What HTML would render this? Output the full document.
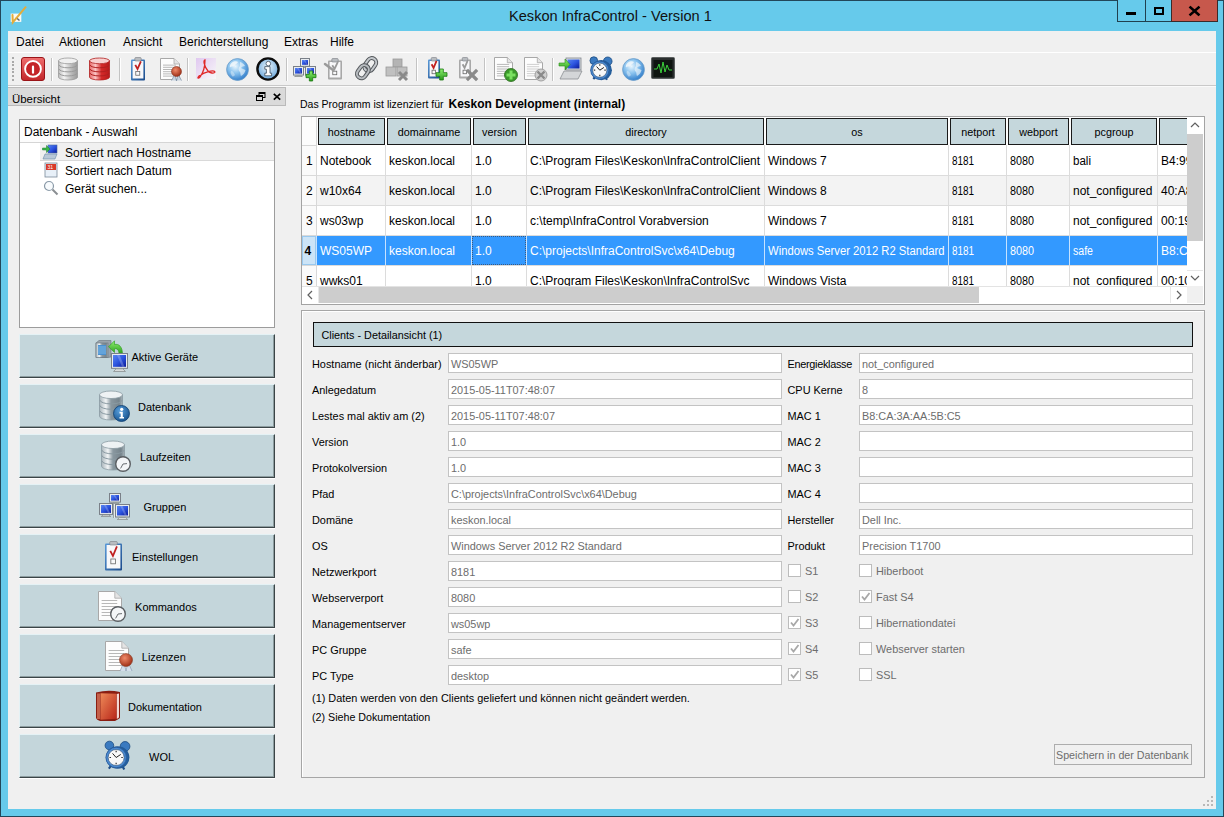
<!DOCTYPE html><html><head><meta charset="utf-8"><style>
*{margin:0;padding:0;box-sizing:border-box}
html,body{width:1224px;height:817px;overflow:hidden;background:#f0f0f0}
body{position:relative;font-family:"Liberation Sans",sans-serif;color:#000;font-size:12px}
.a{position:absolute}
.t{position:absolute;white-space:nowrap}
.btn{position:absolute;left:19px;width:256px;height:44px;background:#c4d6db;border-top:1px solid #e4f2f5;border-left:1px solid #e4f2f5;border-right:1px solid #3b4547;border-bottom:1px solid #3b4547;box-shadow:inset -1px -1px 0 #8d9da0, 0 1px 0 #fff}
.hdr{position:absolute;top:118px;height:27px;background:#c5d7dc;border:1px solid #1a1a1a}
.inp{position:absolute;height:20px;background:#fff;border:1px solid #c3c3c3}
.cb{position:absolute;width:13px;height:13px;background:#fff;border:1px solid #bcbcbc}
svg{overflow:visible}
</style></head><body><svg width="0" height="0" style="position:absolute"><defs>
<linearGradient id="gRed" x1="0" y1="0" x2="0" y2="1"><stop offset="0" stop-color="#ef6e6e"/><stop offset="1" stop-color="#c2262a"/></linearGradient>
<linearGradient id="gSil" x1="0" y1="0" x2="1" y2="0"><stop offset="0" stop-color="#bdbdbd"/><stop offset=".3" stop-color="#f4f4f4"/><stop offset=".7" stop-color="#b8b8b8"/><stop offset="1" stop-color="#9a9a9a"/></linearGradient>
<linearGradient id="gSil2" x1="0" y1="0" x2="1" y2="0"><stop offset="0" stop-color="#aab6bc"/><stop offset=".28" stop-color="#f2f5f6"/><stop offset=".5" stop-color="#8a98a0"/><stop offset=".85" stop-color="#76848c"/><stop offset="1" stop-color="#a8b4ba"/></linearGradient>
<linearGradient id="gClip" x1="0" y1="0" x2="1" y2="1"><stop offset="0" stop-color="#5a9ad8"/><stop offset="1" stop-color="#1a4a8a"/></linearGradient>
<linearGradient id="gRDb" x1="0" y1="0" x2="1" y2="0"><stop offset="0" stop-color="#e86a6a"/><stop offset=".3" stop-color="#fbc4c4"/><stop offset=".6" stop-color="#d42a2a"/><stop offset="1" stop-color="#b81a1a"/></linearGradient>
<linearGradient id="gScr" x1="0" y1="0" x2="1" y2="1"><stop offset="0" stop-color="#5a86f0"/><stop offset=".5" stop-color="#2d55e0"/><stop offset="1" stop-color="#0a1a9a"/></linearGradient>
<radialGradient id="gGlobe" cx=".4" cy=".35" r=".7"><stop offset="0" stop-color="#eaf6fd"/><stop offset=".45" stop-color="#8cc4ef"/><stop offset="1" stop-color="#2a78c8"/></radialGradient>
<linearGradient id="gGrn" x1="0" y1="0" x2="0" y2="1"><stop offset="0" stop-color="#8ef070"/><stop offset="1" stop-color="#2a9c1c"/></linearGradient>
<linearGradient id="gBook" x1="0" y1="0" x2="1" y2="1"><stop offset="0" stop-color="#ee8a58"/><stop offset="1" stop-color="#b8261a"/></linearGradient>
<radialGradient id="gInfo" cx=".5" cy=".4" r=".6"><stop offset="0" stop-color="#e8f4fc"/><stop offset="1" stop-color="#6aa6da"/></radialGradient>
<radialGradient id="gBlueI" cx=".4" cy=".35" r=".7"><stop offset="0" stop-color="#5aa0dc"/><stop offset="1" stop-color="#14508c"/></radialGradient>
<radialGradient id="gClk" cx=".5" cy=".5" r=".6"><stop offset="0" stop-color="#3f86c8"/><stop offset="1" stop-color="#1a4f8c"/></radialGradient>
<radialGradient id="gSeal" cx=".4" cy=".35" r=".7"><stop offset="0" stop-color="#f08a6a"/><stop offset="1" stop-color="#9a2a12"/></radialGradient>
<linearGradient id="gPdf" x1="0" y1="0" x2="1" y2="1"><stop offset="0" stop-color="#e0c8f0"/><stop offset="1" stop-color="#f8f8f8"/></linearGradient>
</defs></svg>
<div class="a" style="left:0px;top:0px;width:1224px;height:817px;background:#66caeb"></div>
<div class="a" style="left:0px;top:0px;width:1224px;height:1px;background:#22475a"></div>
<div class="a" style="left:0px;top:0px;width:1px;height:817px;background:#22475a"></div>
<div class="a" style="left:1223px;top:0px;width:1px;height:817px;background:#22475a"></div>
<div class="a" style="left:0px;top:816px;width:1224px;height:1px;background:#22475a"></div>
<div class="a" style="left:8px;top:31px;width:1208px;height:778px;background:#f0f0f0"></div>
<svg class="a" style="left:10px;top:6px" width="17" height="17" viewBox="0 0 17 17"><rect x="0.7" y="7.6" width="10.6" height="8.3" fill="#fbfaf4"/>
<path d="M6 11.5 L9.5 14.5" stroke="#6a6a6a" stroke-width="1.6"/>
<path d="M2.5 9 L2.8 16.3 L15.6 1.2" stroke="#e3ac3c" stroke-width="2" fill="none" stroke-linecap="round"/></svg>
<div class="t" style="left:509px;top:7.14px;font-size:14.6px;line-height:18px;color:#111;">Keskon InfraControl - Version 1</div>
<div class="a" style="left:1117px;top:0;width:29px;height:22px;border:1px solid #20404e;border-top:none;background:#66caeb"></div>
<div class="a" style="left:1145px;top:0;width:27px;height:22px;border:1px solid #20404e;border-top:none;background:#66caeb"></div>
<div class="a" style="left:1171px;top:0;width:47px;height:22px;border:1px solid #3a2a2a;border-top:none;background:#c7584c"></div>
<div class="a" style="left:1126px;top:12px;width:10px;height:3px;background:#000"></div>
<div class="a" style="left:1154px;top:7px;width:10px;height:8px;border:2px solid #000"></div>
<svg class="a" style="left:1189px;top:6px" width="11" height="10" viewBox="0 0 11 10"><path d="M1.5 1.5 L9.5 8.5 M9.5 1.5 L1.5 8.5" stroke="#000" stroke-width="2.6" stroke-linecap="square"/></svg>
<div class="a" style="left:8px;top:52px;width:1208px;height:1px;background:#ffffff"></div>
<div class="t" style="left:16px;top:35.34px;font-size:12px;line-height:15px;color:#000;">Datei</div>
<div class="t" style="left:59px;top:35.34px;font-size:12px;line-height:15px;color:#000;">Aktionen</div>
<div class="t" style="left:123px;top:35.34px;font-size:12px;line-height:15px;color:#000;">Ansicht</div>
<div class="t" style="left:179px;top:35.34px;font-size:12px;line-height:15px;color:#000;">Berichterstellung</div>
<div class="t" style="left:284px;top:35.34px;font-size:12px;line-height:15px;color:#000;">Extras</div>
<div class="t" style="left:330px;top:35.34px;font-size:12px;line-height:15px;color:#000;">Hilfe</div>
<div class="a" style="left:8px;top:85px;width:1208px;height:1px;background:#c9c9c9"></div>
<div class="a" style="left:8px;top:86px;width:1208px;height:1px;background:#fafafa"></div>
<div class="a" style="left:12px;top:57.0px;width:2px;height:2px;background:#a9a9a9"></div>
<div class="a" style="left:12px;top:60.6px;width:2px;height:2px;background:#a9a9a9"></div>
<div class="a" style="left:12px;top:64.2px;width:2px;height:2px;background:#a9a9a9"></div>
<div class="a" style="left:12px;top:67.8px;width:2px;height:2px;background:#a9a9a9"></div>
<div class="a" style="left:12px;top:71.4px;width:2px;height:2px;background:#a9a9a9"></div>
<div class="a" style="left:12px;top:75.0px;width:2px;height:2px;background:#a9a9a9"></div>
<div class="a" style="left:12px;top:78.6px;width:2px;height:2px;background:#a9a9a9"></div>
<div class="a" style="left:51px;top:58px;width:1px;height:23px;background:#c3c3c3"></div>
<div class="a" style="left:52px;top:58px;width:1px;height:23px;background:#ffffff"></div>
<div class="a" style="left:119px;top:58px;width:1px;height:23px;background:#c3c3c3"></div>
<div class="a" style="left:120px;top:58px;width:1px;height:23px;background:#ffffff"></div>
<div class="a" style="left:187px;top:58px;width:1px;height:23px;background:#c3c3c3"></div>
<div class="a" style="left:188px;top:58px;width:1px;height:23px;background:#ffffff"></div>
<div class="a" style="left:286px;top:58px;width:1px;height:23px;background:#c3c3c3"></div>
<div class="a" style="left:287px;top:58px;width:1px;height:23px;background:#ffffff"></div>
<div class="a" style="left:416px;top:58px;width:1px;height:23px;background:#c3c3c3"></div>
<div class="a" style="left:417px;top:58px;width:1px;height:23px;background:#ffffff"></div>
<div class="a" style="left:484px;top:58px;width:1px;height:23px;background:#c3c3c3"></div>
<div class="a" style="left:485px;top:58px;width:1px;height:23px;background:#ffffff"></div>
<div class="a" style="left:552px;top:58px;width:1px;height:23px;background:#c3c3c3"></div>
<div class="a" style="left:553px;top:58px;width:1px;height:23px;background:#ffffff"></div>
<svg class="a" style="left:21px;top:57px" width="24" height="24" viewBox="0 0 24 24"><rect x="0.5" y="0.5" width="23" height="23" rx="2.5" fill="url(#gRed)" stroke="#9a1418" stroke-width="1"/>
<circle cx="12" cy="11.9" r="7.9" stroke="#fff" stroke-width="1.9" fill="#c42428"/>
<rect x="10.9" y="8.6" width="2.2" height="8.2" rx="1.1" fill="#fff"/></svg>
<svg class="a" style="left:58px;top:58px" width="20" height="22" viewBox="0 0 20 22"><path d="M0.5 2.8600000000000003 L0.5 19.14 A9.5 2.8600000000000003 0 0 0 19.5 19.14 L19.5 2.8600000000000003 Z" fill="url(#gSil)" stroke="#9a9a9a" stroke-width="0.8"/>
<ellipse cx="10.0" cy="2.8600000000000003" rx="9.5" ry="2.8600000000000003" fill="#f0f0f0" stroke="#9a9a9a" stroke-width="0.8"/><path d="M1 6.930000000000001 A9.0 2.8600000000000003 0 0 0 19 6.930000000000001" fill="none" stroke="#9a9a9a" stroke-width="1"/><path d="M1 11.0 A9.0 2.8600000000000003 0 0 0 19 11.0" fill="none" stroke="#9a9a9a" stroke-width="1"/><path d="M1 15.07 A9.0 2.8600000000000003 0 0 0 19 15.07" fill="none" stroke="#9a9a9a" stroke-width="1"/></svg>
<svg class="a" style="left:89px;top:58px" width="21" height="22" viewBox="0 0 21 22"><path d="M0.5 2.8600000000000003 L0.5 19.14 A10.0 2.8600000000000003 0 0 0 20.5 19.14 L20.5 2.8600000000000003 Z" fill="url(#gRDb)" stroke="#b02020" stroke-width="0.8"/>
<ellipse cx="10.5" cy="2.8600000000000003" rx="10.0" ry="2.8600000000000003" fill="#f8d0d0" stroke="#b02020" stroke-width="0.8"/><path d="M1 6.930000000000001 A9.5 2.8600000000000003 0 0 0 20 6.930000000000001" fill="none" stroke="#b02020" stroke-width="1"/><path d="M1 11.0 A9.5 2.8600000000000003 0 0 0 20 11.0" fill="none" stroke="#b02020" stroke-width="1"/><path d="M1 15.07 A9.5 2.8600000000000003 0 0 0 20 15.07" fill="none" stroke="#b02020" stroke-width="1"/></svg>
<svg class="a" style="left:130px;top:57px" width="16" height="24" viewBox="0 0 16 24"><rect x="1" y="2.5" width="14" height="21" rx="1" fill="url(#gClip)"/>
<rect x="2.6" y="4" width="10.8" height="17.5" fill="#f8f8fa"/>
<rect x="4.8" y="0.5" width="6.4" height="3.5" rx="1" fill="#b8bcc0" stroke="#7a7e84" stroke-width="0.6"/>
<path d="M5.28 7.92 L7.52 12.0 L10.88 4.32" stroke="#c02020" stroke-width="1.8" fill="none"/>
<rect x="5.76" y="14.399999999999999" width="4.0" height="3.84" fill="none" stroke="#6a6a6a" stroke-width="0.8"/></svg>
<svg class="a" style="left:160px;top:58px" width="20" height="22" viewBox="0 0 20 22"><path d="M0.5 0.5 H14.0 L19.5 6.0 V21.5 H0.5 Z" fill="#fdfdfd" stroke="#a8a8a8" stroke-width="1"/>
<path d="M14.0 0.5 V6.0 H19.5" fill="#e4e4e4" stroke="#a8a8a8" stroke-width="0.8"/><rect x="3.0" y="6.6" width="13.0" height="1" fill="#b8b8b8"/><rect x="3.0" y="8.8" width="13.0" height="1" fill="#b8b8b8"/><rect x="3.0" y="11.0" width="13.0" height="1" fill="#b8b8b8"/><rect x="3.0" y="13.2" width="13.0" height="1" fill="#b8b8b8"/><rect x="3.0" y="15.4" width="13.0" height="1" fill="#b8b8b8"/><rect x="3.0" y="17.6" width="13.0" height="1" fill="#b8b8b8"/></svg>
<svg class="a" style="left:170px;top:65px" width="13" height="17" viewBox="0 0 13 17"><path d="M1.5 15.5 L5 9 L6.5 16 L8 9 L11.5 15.5" fill="#c8d4e0" stroke="#7a8ca0" stroke-width=".7"/><circle cx="6.5" cy="6.5" r="5" fill="url(#gSeal)" stroke="#7a2410" stroke-width=".5"/></svg>
<svg class="a" style="left:196px;top:58px" width="20" height="21" viewBox="0 0 20 21"><rect x="0" y="0" width="20" height="21" fill="url(#gPdf)"/>
<path d="M9 2 C 7 2 8 8 12 13 C 14 15 18 16 19 14 C 18 12 10 13 3 18 C 1 20 2 21 4 19 C 7 15 9 8 9 2 Z" fill="none" stroke="#e02828" stroke-width="1.3"/></svg>
<svg class="a" style="left:226px;top:58px" width="23" height="23" viewBox="0 0 23 23"><circle cx="11.5" cy="11.5" r="10.9" fill="url(#gGlobe)" stroke="#6a9cc8" stroke-width="0.8"/>
<g transform="scale(1.0)" fill="#f2f8fc" opacity=".85">
<path d="M6 4.5 C8 3 11 3 12 4 C11 6 9 6 8.5 8 C7 9 5 8 4 9.5 C3.5 8 4 6 6 4.5 Z"/>
<path d="M14 4 C16 4.5 18 6 19 8 C17.5 8.5 16 8 15 10 C16 11 18 11 19.5 12 C19 15 17 17 15 18 C14 16 15 14 13 13 C12 11 13 9 14 8 Z" opacity=".75"/>
<path d="M5 13 C7 13 8 15 9 17 C8 18.5 7 19 6 18 C5 16 4 15 5 13 Z" opacity=".5"/>
</g></svg>
<svg class="a" style="left:256px;top:57px" width="24" height="24" viewBox="0 0 24 24"><circle cx="12" cy="12" r="10.6" fill="url(#gInfo)" stroke="#0c0c0c" stroke-width="2.4"/>
<circle cx="12.3" cy="6.6" r="2.3" fill="#fff" stroke="#2a3a4a" stroke-width=".7"/>
<path d="M8.8 9.6 H14 V16.2 H15.6 V18.8 H8.8 V16.2 H10.4 V12.2 H8.8 Z" fill="#fff" stroke="#2a3a4a" stroke-width=".7"/></svg>
<svg class="a" style="left:300px;top:58px" width="10" height="10" viewBox="0 0 10 10"><rect x="0.5" y="0.5" width="9" height="7.800000000000001" fill="#e8ecf0" stroke="#7a8088" stroke-width="1"/>
<rect x="2" y="2" width="6" height="4.800000000000001" fill="url(#gScr)"/>
<path d="M3.5 2 L5.0 2 L8.0 6.800000000000001 L6.5 6.800000000000001 Z" fill="#fff" opacity=".22"/>
<path d="M3.0 8.8 L1.5 9.5 L8.5 9.5 L7.0 8.8 Z" fill="#d8dcdc" stroke="#8a9090" stroke-width="0.8"/></svg>
<svg class="a" style="left:293px;top:66px" width="11" height="11" viewBox="0 0 11 11"><rect x="0.5" y="0.5" width="10" height="8.58" fill="#e8ecf0" stroke="#7a8088" stroke-width="1"/>
<rect x="2" y="2" width="7" height="5.58" fill="url(#gScr)"/>
<path d="M3.8499999999999996 2 L5.5 2 L8.8 7.58 L7.15 7.58 Z" fill="#fff" opacity=".22"/>
<path d="M3.3 9.58 L1.65 10.5 L9.35 10.5 L7.699999999999999 9.58 Z" fill="#d8dcdc" stroke="#8a9090" stroke-width="0.8"/></svg>
<svg class="a" style="left:305px;top:66px" width="11" height="11" viewBox="0 0 11 11"><rect x="0.5" y="0.5" width="10" height="8.58" fill="#e8ecf0" stroke="#7a8088" stroke-width="1"/>
<rect x="2" y="2" width="7" height="5.58" fill="url(#gScr)"/>
<path d="M3.8499999999999996 2 L5.5 2 L8.8 7.58 L7.15 7.58 Z" fill="#fff" opacity=".22"/>
<path d="M3.3 9.58 L1.65 10.5 L9.35 10.5 L7.699999999999999 9.58 Z" fill="#d8dcdc" stroke="#8a9090" stroke-width="0.8"/></svg>
<svg class="a" style="left:306px;top:71px" width="10" height="10" viewBox="0 0 10 10"><path d="M3.3333333333333335 0 H6.666666666666667 V3.3333333333333335 H10 V6.666666666666667 H6.666666666666667 V10 H3.3333333333333335 V6.666666666666667 H0 V3.3333333333333335 H3.3333333333333335 Z" fill="url(#gGrn)" stroke="#1a7a10" stroke-width="0.8"/></svg>
<svg class="a" style="left:327px;top:58px" width="16" height="22" viewBox="0 0 16 22"><rect x="1" y="2.5" width="14" height="19" rx="1" fill="#a8a8a8"/>
<rect x="2.6" y="4" width="10.8" height="15.5" fill="#f8f8fa"/>
<rect x="4.8" y="0.5" width="6.4" height="3.5" rx="1" fill="#b8bcc0" stroke="#7a7e84" stroke-width="0.6"/>
<path d="M5.28 7.260000000000001 L7.52 11.0 L10.88 3.96" stroke="#9a9a9a" stroke-width="1.8" fill="none"/>
<rect x="5.76" y="13.2" width="4.0" height="3.52" fill="none" stroke="#6a6a6a" stroke-width="0.8"/></svg>
<svg class="a" style="left:324px;top:62px" width="10" height="10" viewBox="0 0 10 10"><path d="M1 2 L9 8" stroke="#9a9a9a" stroke-width="2.5" stroke-linecap="round"/></svg>
<svg class="a" style="left:354px;top:57px" width="24" height="24" viewBox="0 0 24 24"><g transform="rotate(35 12 12)">
<rect x="8.5" y="-1" width="9" height="14" rx="4.5" fill="none" stroke="#54585c" stroke-width="4"/>
<rect x="8.5" y="-1" width="9" height="14" rx="4.5" fill="none" stroke="#c4c8cc" stroke-width="2"/>
<rect x="6.5" y="9" width="9" height="14" rx="4.5" fill="none" stroke="#54585c" stroke-width="4"/>
<rect x="6.5" y="9" width="9" height="14" rx="4.5" fill="none" stroke="#b8bcc0" stroke-width="2"/>
</g></svg>
<svg class="a" style="left:385px;top:58px" width="24" height="24" viewBox="0 0 24 24"><rect x="8" y="1" width="9" height="8" fill="#b4b4b4" stroke="#9a9a9a" stroke-width=".8"/>
<rect x="1" y="9" width="10" height="9" fill="#c0c0c0" stroke="#9a9a9a" stroke-width=".8"/>
<rect x="12" y="9" width="10" height="9" fill="#c0c0c0" stroke="#9a9a9a" stroke-width=".8"/>
<path d="M14 14 L22 22 M22 14 L14 22" stroke="#8a8a8a" stroke-width="3"/></svg>
<svg class="a" style="left:427px;top:57px" width="14" height="22" viewBox="0 0 14 22"><rect x="1" y="2.5" width="12" height="19" rx="1" fill="url(#gClip)"/>
<rect x="2.6" y="4" width="8.8" height="15.5" fill="#f8f8fa"/>
<rect x="4.2" y="0.5" width="5.6000000000000005" height="3.5" rx="1" fill="#b8bcc0" stroke="#7a7e84" stroke-width="0.6"/>
<path d="M4.62 7.260000000000001 L6.58 11.0 L9.520000000000001 3.96" stroke="#c02020" stroke-width="1.8" fill="none"/>
<rect x="5.04" y="13.2" width="3.5" height="3.52" fill="none" stroke="#6a6a6a" stroke-width="0.8"/></svg>
<svg class="a" style="left:436px;top:69px" width="11" height="11" viewBox="0 0 11 11"><path d="M3.6666666666666665 0 H7.333333333333333 V3.6666666666666665 H11 V7.333333333333333 H7.333333333333333 V11 H3.6666666666666665 V7.333333333333333 H0 V3.6666666666666665 H3.6666666666666665 Z" fill="url(#gGrn)" stroke="#1a7a10" stroke-width="0.8"/></svg>
<svg class="a" style="left:458px;top:57px" width="14" height="22" viewBox="0 0 14 22"><rect x="1" y="2.5" width="12" height="19" rx="1" fill="#a8a8a8"/>
<rect x="2.6" y="4" width="8.8" height="15.5" fill="#f8f8fa"/>
<rect x="4.2" y="0.5" width="5.6000000000000005" height="3.5" rx="1" fill="#b8bcc0" stroke="#7a7e84" stroke-width="0.6"/>
<path d="M4.62 7.260000000000001 L6.58 11.0 L9.520000000000001 3.96" stroke="#9a9a9a" stroke-width="1.8" fill="none"/>
<rect x="5.04" y="13.2" width="3.5" height="3.52" fill="none" stroke="#6a6a6a" stroke-width="0.8"/></svg>
<svg class="a" style="left:466px;top:69px" width="12" height="12" viewBox="0 0 12 12"><path d="M2 2 L10 10 M10 2 L2 10" stroke="#8a8a8a" stroke-width="3.2" stroke-linecap="square"/></svg>
<svg class="a" style="left:494px;top:57px" width="19" height="23" viewBox="0 0 19 23"><path d="M0.5 0.5 H13.3 L18.5 5.7 V22.5 H0.5 Z" fill="#fdfdfd" stroke="#a8a8a8" stroke-width="1"/>
<path d="M13.3 0.5 V5.7 H18.5" fill="#e4e4e4" stroke="#a8a8a8" stroke-width="0.8"/><rect x="2.85" y="6.9" width="12.35" height="1" fill="#b8b8b8"/><rect x="2.85" y="9.2" width="12.35" height="1" fill="#b8b8b8"/><rect x="2.85" y="11.5" width="12.35" height="1" fill="#b8b8b8"/><rect x="2.85" y="13.8" width="12.35" height="1" fill="#b8b8b8"/><rect x="2.85" y="16.1" width="12.35" height="1" fill="#b8b8b8"/><rect x="2.85" y="18.4" width="12.35" height="1" fill="#b8b8b8"/></svg>
<svg class="a" style="left:504px;top:68px" width="14" height="14" viewBox="0 0 14 14"><circle cx="7" cy="7" r="6.5" fill="#3a9a2a" stroke="#2a6a1a" stroke-width=".8"/><path d="M7 2.5 V11.5 M2.5 7 H11.5" stroke="#7ae060" stroke-width="3"/></svg>
<svg class="a" style="left:524px;top:57px" width="19" height="23" viewBox="0 0 19 23"><path d="M0.5 0.5 H13.3 L18.5 5.7 V22.5 H0.5 Z" fill="#fdfdfd" stroke="#a8a8a8" stroke-width="1"/>
<path d="M13.3 0.5 V5.7 H18.5" fill="#e4e4e4" stroke="#a8a8a8" stroke-width="0.8"/><rect x="2.85" y="6.9" width="12.35" height="1" fill="#d0d0d0"/><rect x="2.85" y="9.2" width="12.35" height="1" fill="#d0d0d0"/><rect x="2.85" y="11.5" width="12.35" height="1" fill="#d0d0d0"/><rect x="2.85" y="13.8" width="12.35" height="1" fill="#d0d0d0"/><rect x="2.85" y="16.1" width="12.35" height="1" fill="#d0d0d0"/><rect x="2.85" y="18.4" width="12.35" height="1" fill="#d0d0d0"/></svg>
<svg class="a" style="left:534px;top:68px" width="14" height="14" viewBox="0 0 14 14"><circle cx="7" cy="7" r="6" fill="#d0d0d0" stroke="#a0a0a0" stroke-width="1"/><path d="M3.5 3.5 L10.5 10.5 M10.5 3.5 L3.5 10.5" stroke="#8a8a8a" stroke-width="2.4"/></svg>
<svg class="a" style="left:558px;top:57px" width="24" height="24" viewBox="0 0 24 24"><rect x="8" y="1" width="15" height="12" fill="#d8dce0" stroke="#80868c" stroke-width=".8"/>
<rect x="9.5" y="2.5" width="12" height="9" fill="url(#gScr)"/>
<path d="M6 14 L24 14 L20 22 L2 22 Z" fill="#d4d6d8" stroke="#8a8e92" stroke-width=".8"/>
<path d="M1 6 H7 V2 L12 7.5 L7 13 V9 H1 Z" fill="url(#gGrn)" stroke="#2a8a1a" stroke-width=".6"/></svg>
<svg class="a" style="left:589px;top:57px" width="24" height="24" viewBox="0 0 24 24"><circle cx="4.800000000000001" cy="3.5999999999999996" r="3.84" fill="#3a7ac0" stroke="#1a4a80" stroke-width="0.8"/>
<circle cx="18.72" cy="4.32" r="4.32" fill="#3a7ac0" stroke="#1a4a80" stroke-width="0.8"/>
<path d="M4.32 22.080000000000002 L7.199999999999999 18.72 M18.0 22.799999999999997 L15.600000000000001 18.72" stroke="#1e4e88" stroke-width="2.2"/>
<ellipse cx="12.3" cy="13.200000000000001" rx="10.620000000000001" ry="10.120000000000001" fill="url(#gClk)"/>
<circle cx="10.8" cy="13.200000000000001" r="9.120000000000001" fill="#4a8ad0" stroke="#2a5a9a" stroke-width="0.8"/>
<circle cx="10.8" cy="13.200000000000001" r="7.113600000000001" fill="#f8f8f8" stroke="#2a4a70" stroke-width="0.6"/>
<path d="M10.8 13.200000000000001 L7.6080000000000005 9.552 M10.8 13.200000000000001 L14.904000000000002 10.464" stroke="#222" stroke-width="1"/>
<path d="M10.8 7.272 V8.64 M10.8 19.128 V17.76 M4.872 13.200000000000001 H6.24 M16.728 13.200000000000001 H15.360000000000001" stroke="#333" stroke-width="1.2"/></svg>
<svg class="a" style="left:622px;top:58px" width="23" height="23" viewBox="0 0 23 23"><circle cx="11.5" cy="11.5" r="10.9" fill="url(#gGlobe)" stroke="#6a9cc8" stroke-width="0.8"/>
<g transform="scale(1.0)" fill="#f2f8fc" opacity=".85">
<path d="M6 4.5 C8 3 11 3 12 4 C11 6 9 6 8.5 8 C7 9 5 8 4 9.5 C3.5 8 4 6 6 4.5 Z"/>
<path d="M14 4 C16 4.5 18 6 19 8 C17.5 8.5 16 8 15 10 C16 11 18 11 19.5 12 C19 15 17 17 15 18 C14 16 15 14 13 13 C12 11 13 9 14 8 Z" opacity=".75"/>
<path d="M5 13 C7 13 8 15 9 17 C8 18.5 7 19 6 18 C5 16 4 15 5 13 Z" opacity=".5"/>
</g></svg>
<svg class="a" style="left:651px;top:57px" width="24" height="24" viewBox="0 0 24 24"><rect x="0.5" y="0.5" width="23" height="21" rx="1" fill="#2a2e2e" stroke="#5a5e5e" stroke-width="1"/>
<rect x="2.5" y="3" width="19" height="17" fill="#0e1410"/>
<path d="M3 12 H6 L8 7 L10 16 L12 5 L14 15 L16 8 L18 13 H21" stroke="#3ad03a" stroke-width="1" fill="none"/></svg>
<div class="a" style="left:8px;top:87px;width:278px;height:19px;background:#dadada;border:1px solid #bababa;border-left:none"></div>
<div class="t" style="left:12px;top:91.55px;font-size:11.4px;line-height:14px;color:#000;">Übersicht</div>
<svg class="a" style="left:256px;top:92px" width="10" height="9" viewBox="0 0 10 9"><rect x="3" y="0.5" width="6" height="5" fill="none" stroke="#000" stroke-width="1"/><rect x="3" y="0.5" width="6" height="1.5" fill="#000"/><rect x="0.5" y="3.5" width="6" height="5" fill="#d9d9d9" stroke="#000" stroke-width="1"/><rect x="0.5" y="3.5" width="6" height="1.5" fill="#000"/></svg>
<svg class="a" style="left:273px;top:93px" width="8" height="8" viewBox="0 0 8 8"><path d="M0.8 0.8 L7.2 6.6 M7.2 0.8 L0.8 6.6" stroke="#000" stroke-width="1.7"/></svg>
<div class="a" style="left:19px;top:119px;width:256px;height:209px;background:#fff;border:1px solid #9c9c9c"></div>
<div class="a" style="left:20px;top:120px;width:254px;height:22px;background:#fcfcfc"></div>
<div class="a" style="left:20px;top:142px;width:254px;height:1px;background:#d5d5d5"></div>
<div class="t" style="left:24px;top:125.34px;font-size:12px;line-height:15px;color:#000;">Datenbank - Auswahl</div>
<div class="a" style="left:40px;top:143px;width:234px;height:18px;background:#f0f0f0;border-bottom:1px solid #d9d9d9"></div>
<div class="t" style="left:65px;top:146.34px;font-size:12px;line-height:15px;color:#000;">Sortiert nach Hostname</div>
<div class="t" style="left:65px;top:164.34px;font-size:12px;line-height:15px;color:#000;">Sortiert nach Datum</div>
<div class="t" style="left:65px;top:182.34px;font-size:12px;line-height:15px;color:#000;">Gerät suchen...</div>
<svg class="a" style="left:42px;top:144px" width="16" height="16" viewBox="0 0 16 16"><path d="M3 10 L15 10 L13 15 L1 15 Z" fill="#b8c8d8" stroke="#6a8aa8" stroke-width=".6"/>
<rect x="6" y="1" width="9" height="8" fill="url(#gScr)" stroke="#4a6aa0" stroke-width=".6"/>
<path d="M0.5 4 H4.5 V1.5 L8 5 L4.5 8.5 V6 H0.5 Z" fill="#3ab84a" stroke="#1a7a2a" stroke-width=".5"/></svg>
<svg class="a" style="left:44px;top:162px" width="14" height="16" viewBox="0 0 14 16"><rect x="1" y="1" width="12" height="14" fill="#e8f0f8" stroke="#7a8a9a" stroke-width=".8"/>
<rect x="2" y="2" width="10" height="6" fill="#d83a2a"/>
<text x="3.5" y="7" font-size="5" fill="#fff" font-family="Liberation Sans">31</text></svg>
<svg class="a" style="left:43px;top:180px" width="16" height="16" viewBox="0 0 16 16"><circle cx="6" cy="6" r="4.5" fill="#f8fbfd" stroke="#8a9aa8" stroke-width="1.2"/>
<path d="M9.5 9.5 L14.5 14.5" stroke="#8a8e92" stroke-width="2"/></svg>
<div class="btn" style="top:334px"></div>
<div class="t" style="left:131.5px;top:349.59px;font-size:11px;line-height:14px;color:#000;">Aktive Geräte</div>
<div class="btn" style="top:384px"></div>
<div class="t" style="left:138.0px;top:399.59px;font-size:11px;line-height:14px;color:#000;">Datenbank</div>
<div class="btn" style="top:434px"></div>
<div class="t" style="left:139.9px;top:449.59px;font-size:11px;line-height:14px;color:#000;">Laufzeiten</div>
<div class="btn" style="top:484px"></div>
<div class="t" style="left:143.5px;top:499.59px;font-size:11px;line-height:14px;color:#000;">Gruppen</div>
<div class="btn" style="top:534px"></div>
<div class="t" style="left:132.0px;top:549.59px;font-size:11px;line-height:14px;color:#000;">Einstellungen</div>
<div class="btn" style="top:584px"></div>
<div class="t" style="left:135.1px;top:599.59px;font-size:11px;line-height:14px;color:#000;">Kommandos</div>
<div class="btn" style="top:634px"></div>
<div class="t" style="left:141.8px;top:649.59px;font-size:11px;line-height:14px;color:#000;">Lizenzen</div>
<div class="btn" style="top:684px"></div>
<div class="t" style="left:128.0px;top:699.59px;font-size:11px;line-height:14px;color:#000;">Dokumentation</div>
<div class="btn" style="top:734px"></div>
<div class="t" style="left:149.0px;top:749.59px;font-size:11px;line-height:14px;color:#000;">WOL</div>
<svg class="a" style="left:95px;top:340px" width="32" height="32" viewBox="0 0 32 32"><path d="M1 3 L4 0.5 L16 0.5 L16 17 L13 17.5 L1 17.5 Z" fill="#9aa4ac" stroke="#6a747c" stroke-width=".6"/>
<rect x="1" y="3" width="12" height="14.5" fill="url(#gSil2)" stroke="#6a747c" stroke-width=".6"/>
<rect x="3" y="5" width="8" height="10" fill="#4a90d0"/>
<path d="M3 7 H11 M3 9 H11 M3 11 H11 M3 13 H11" stroke="#8ac0ea" stroke-width=".8"/>
<path d="M27.5 14 C27.5 6.5 23.5 3.5 19.5 4.5 L19.5 0.8 L13.5 6.8 L19.5 12.5 L19.5 8.8 C22.5 8.2 24 10.5 24 14 Z" fill="url(#gGrn)" stroke="#2a9a1a" stroke-width=".6"/></svg>
<svg class="a" style="left:111px;top:353px" width="17" height="19" viewBox="0 0 17 19"><rect x="0.5" y="0.5" width="16" height="14.82" fill="#e8ecf0" stroke="#7a8088" stroke-width="1"/>
<rect x="2" y="2" width="13" height="11.82" fill="url(#gScr)"/>
<path d="M5.949999999999999 2 L8.5 2 L13.600000000000001 13.82 L11.05 13.82 Z" fill="#fff" opacity=".22"/>
<path d="M5.1 15.82 L2.55 18.5 L14.45 18.5 L11.899999999999999 15.82 Z" fill="#d8dcdc" stroke="#8a9090" stroke-width="0.8"/></svg>
<svg class="a" style="left:99px;top:391px" width="24" height="29" viewBox="0 0 24 29"><path d="M0.5 3.77 L0.5 25.23 A11.5 3.77 0 0 0 23.5 25.23 L23.5 3.77 Z" fill="url(#gSil2)" stroke="#8a9aa2" stroke-width="0.8"/>
<ellipse cx="12.0" cy="3.77" rx="11.5" ry="3.77" fill="#eef2f4" stroke="#8a9aa2" stroke-width="0.8"/><path d="M1 9.135 A11.0 3.77 0 0 0 23 9.135" fill="none" stroke="#8a9aa2" stroke-width="1"/><path d="M1 14.5 A11.0 3.77 0 0 0 23 14.5" fill="none" stroke="#8a9aa2" stroke-width="1"/><path d="M1 19.865 A11.0 3.77 0 0 0 23 19.865" fill="none" stroke="#8a9aa2" stroke-width="1"/></svg>
<svg class="a" style="left:113px;top:405px" width="17" height="17" viewBox="0 0 17 17"><circle cx="8.5" cy="8.5" r="8" fill="url(#gBlueI)" stroke="#0e3e6e" stroke-width=".8"/>
<circle cx="8.7" cy="4.3" r="1.6" fill="#fff"/>
<path d="M6.5 6.8 H9.8 V12 H11 V13.6 H6.5 V12 H7.7 V8.4 H6.5 Z" fill="#fff"/></svg>
<svg class="a" style="left:101px;top:441px" width="24" height="29" viewBox="0 0 24 29"><path d="M0.5 3.77 L0.5 25.23 A11.5 3.77 0 0 0 23.5 25.23 L23.5 3.77 Z" fill="url(#gSil2)" stroke="#8a9aa2" stroke-width="0.8"/>
<ellipse cx="12.0" cy="3.77" rx="11.5" ry="3.77" fill="#eef2f4" stroke="#8a9aa2" stroke-width="0.8"/><path d="M1 9.135 A11.0 3.77 0 0 0 23 9.135" fill="none" stroke="#8a9aa2" stroke-width="1"/><path d="M1 14.5 A11.0 3.77 0 0 0 23 14.5" fill="none" stroke="#8a9aa2" stroke-width="1"/><path d="M1 19.865 A11.0 3.77 0 0 0 23 19.865" fill="none" stroke="#8a9aa2" stroke-width="1"/></svg>
<svg class="a" style="left:115px;top:456px" width="16" height="16" viewBox="0 0 16 16"><circle cx="8" cy="8" r="7.3" fill="#f4f6f8" stroke="#5a5e62" stroke-width="1.4"/>
<path d="M5.6 12.4 L8 8 L12.0 7.6" stroke="#6a6e72" stroke-width="1" fill="none"/></svg>
<div class="a" style="left:113px;top:500px;width:2px;height:18px;background:#e6eaec;border-left:1px solid #9aa4a8"></div>
<svg class="a" style="left:109px;top:493px" width="12" height="11" viewBox="0 0 12 11"><rect x="0.5" y="0.5" width="11" height="8.58" fill="#e8ecf0" stroke="#7a8088" stroke-width="1"/>
<rect x="2" y="2" width="8" height="5.58" fill="url(#gScr)"/>
<path d="M4.199999999999999 2 L6.0 2 L9.600000000000001 7.58 L7.800000000000001 7.58 Z" fill="#fff" opacity=".22"/>
<path d="M3.5999999999999996 9.58 L1.7999999999999998 10.5 L10.2 10.5 L8.399999999999999 9.58 Z" fill="#d8dcdc" stroke="#8a9090" stroke-width="0.8"/></svg>
<svg class="a" style="left:99px;top:503px" width="14" height="14" viewBox="0 0 14 14"><rect x="0.5" y="0.5" width="13" height="10.92" fill="#e8ecf0" stroke="#7a8088" stroke-width="1"/>
<rect x="2" y="2" width="10" height="7.92" fill="url(#gScr)"/>
<path d="M4.8999999999999995 2 L7.0 2 L11.200000000000001 9.92 L9.1 9.92 Z" fill="#fff" opacity=".22"/>
<path d="M4.2 11.92 L2.1 13.5 L11.9 13.5 L9.799999999999999 11.92 Z" fill="#d8dcdc" stroke="#8a9090" stroke-width="0.8"/></svg>
<svg class="a" style="left:115px;top:504px" width="15" height="16" viewBox="0 0 15 16"><rect x="0.5" y="0.5" width="14" height="12.48" fill="#e8ecf0" stroke="#7a8088" stroke-width="1"/>
<rect x="2" y="2" width="11" height="9.48" fill="url(#gScr)"/>
<path d="M5.25 2 L7.5 2 L12.0 11.48 L9.75 11.48 Z" fill="#fff" opacity=".22"/>
<path d="M4.5 13.48 L2.25 15.5 L12.75 15.5 L10.5 13.48 Z" fill="#d8dcdc" stroke="#8a9090" stroke-width="0.8"/></svg>
<svg class="a" style="left:104px;top:541px" width="19" height="30" viewBox="0 0 19 30"><rect x="1" y="2.5" width="17" height="27" rx="1" fill="url(#gClip)"/>
<rect x="2.6" y="4" width="13.8" height="23.5" fill="#f8f8fa"/>
<rect x="5.7" y="0.5" width="7.6000000000000005" height="3.5" rx="1" fill="#b8bcc0" stroke="#7a7e84" stroke-width="0.6"/>
<path d="M6.2700000000000005 9.9 L8.93 15.0 L12.920000000000002 5.3999999999999995" stroke="#c02020" stroke-width="1.8" fill="none"/>
<rect x="6.84" y="18.0" width="4.75" height="4.8" fill="none" stroke="#6a6a6a" stroke-width="0.8"/></svg>
<svg class="a" style="left:98px;top:591px" width="24" height="30" viewBox="0 0 24 30"><path d="M0.5 0.5 H16.8 L23.5 7.199999999999999 V29.5 H0.5 Z" fill="#fdfdfd" stroke="#a8a8a8" stroke-width="1"/>
<path d="M16.8 0.5 V7.199999999999999 H23.5" fill="#e4e4e4" stroke="#a8a8a8" stroke-width="0.8"/><rect x="3.5999999999999996" y="9.0" width="15.600000000000001" height="1" fill="#b8b8b8"/><rect x="3.5999999999999996" y="12.0" width="15.600000000000001" height="1" fill="#b8b8b8"/><rect x="3.5999999999999996" y="15.0" width="15.600000000000001" height="1" fill="#b8b8b8"/><rect x="3.5999999999999996" y="18.0" width="15.600000000000001" height="1" fill="#b8b8b8"/><rect x="3.5999999999999996" y="21.0" width="15.600000000000001" height="1" fill="#b8b8b8"/><rect x="3.5999999999999996" y="24.0" width="15.600000000000001" height="1" fill="#b8b8b8"/></svg>
<svg class="a" style="left:110px;top:606px" width="16" height="16" viewBox="0 0 16 16"><circle cx="8" cy="8" r="7.3" fill="#f4f6f8" stroke="#5a5e62" stroke-width="1.4"/>
<path d="M5.6 12.4 L8 8 L12.0 7.6" stroke="#6a6e72" stroke-width="1" fill="none"/></svg>
<svg class="a" style="left:105px;top:641px" width="24" height="30" viewBox="0 0 24 30"><path d="M0.5 0.5 H16.8 L23.5 7.199999999999999 V29.5 H0.5 Z" fill="#fdfdfd" stroke="#a8a8a8" stroke-width="1"/>
<path d="M16.8 0.5 V7.199999999999999 H23.5" fill="#e4e4e4" stroke="#a8a8a8" stroke-width="0.8"/><rect x="3.5999999999999996" y="9.0" width="15.600000000000001" height="1" fill="#b8b8b8"/><rect x="3.5999999999999996" y="12.0" width="15.600000000000001" height="1" fill="#b8b8b8"/><rect x="3.5999999999999996" y="15.0" width="15.600000000000001" height="1" fill="#b8b8b8"/><rect x="3.5999999999999996" y="18.0" width="15.600000000000001" height="1" fill="#b8b8b8"/><rect x="3.5999999999999996" y="21.0" width="15.600000000000001" height="1" fill="#b8b8b8"/><rect x="3.5999999999999996" y="24.0" width="15.600000000000001" height="1" fill="#b8b8b8"/></svg>
<svg class="a" style="left:116px;top:650px" width="20" height="22" viewBox="0 0 20 22"><path d="M4 21 L8 12 L10 21 L12 12 L16 21" fill="#d4deea" stroke="#8a9cb0" stroke-width=".7"/>
<circle cx="10" cy="10" r="6.5" fill="url(#gSeal)" stroke="#7a2a10" stroke-width=".5"/></svg>
<svg class="a" style="left:95px;top:690px" width="26" height="32" viewBox="0 0 26 32"><path d="M1 2.5 Q13 -0.5 25 2 L25 28 Q23 29.5 20 31 L5 31 Q1.5 30 1 28 Z" fill="#8a1e12"/>
<path d="M5.5 3.2 L21.5 3.8 L21.5 28.8 L5.5 29.8 Z" fill="url(#gBook)"/>
<rect x="2" y="3.5" width="3.2" height="25.5" fill="#c4604a"/>
<path d="M21.8 4 L24 3.6 L24 27.6 L21.8 29 Z" fill="#f4d8d4"/></svg>
<svg class="a" style="left:104px;top:741px" width="27" height="30" viewBox="0 0 27 30"><circle cx="5.4" cy="4.5" r="4.32" fill="#3a7ac0" stroke="#1a4a80" stroke-width="0.8"/>
<circle cx="21.060000000000002" cy="5.3999999999999995" r="4.859999999999999" fill="#3a7ac0" stroke="#1a4a80" stroke-width="0.8"/>
<path d="M4.859999999999999 27.6 L8.1 23.400000000000002 M20.25 28.5 L17.55 23.400000000000002" stroke="#1e4e88" stroke-width="2.2"/>
<ellipse cx="13.65" cy="16.5" rx="11.76" ry="11.26" fill="url(#gClk)"/>
<circle cx="12.15" cy="16.5" r="10.26" fill="#4a8ad0" stroke="#2a5a9a" stroke-width="0.8"/>
<circle cx="12.15" cy="16.5" r="8.0028" fill="#f8f8f8" stroke="#2a4a70" stroke-width="0.6"/>
<path d="M12.15 16.5 L8.559000000000001 12.396 M12.15 16.5 L16.767 13.422" stroke="#222" stroke-width="1"/>
<path d="M12.15 9.831 V11.370000000000001 M12.15 23.169 V21.63 M5.481 16.5 H7.0200000000000005 M18.819000000000003 16.5 H17.28" stroke="#333" stroke-width="1.2"/></svg>
<div class="t" style="left:300px;top:98.36px;font-size:10.5px;line-height:13px;color:#000;">Das Programm ist lizenziert für</div>
<div class="t" style="left:448.5px;top:96.84px;font-size:12px;line-height:15px;color:#000;"><b>Keskon Development (internal)</b></div>
<div class="a" style="left:301px;top:116px;width:904px;height:189px;background:#fff;border:1px solid #a3a3a3"></div>
<div class="a" style="left:302px;top:117px;width:885px;height:169px;overflow:hidden">
<div class="a" style="left:0px;top:0px;width:885px;height:28px;background:#fcfcfc"></div>
<div class="a" style="left:16px;top:1px;width:67px;height:27px;background:#c5d7dc;border:1px solid #1a1a1a"></div>
<div class="t" style="left:16px;top:1px;width:67px;height:27px;text-align:center;font-size:10.8px;line-height:27px;padding-top:1px">hostname</div>
<div class="a" style="left:85px;top:1px;width:84px;height:27px;background:#c5d7dc;border:1px solid #1a1a1a"></div>
<div class="t" style="left:85px;top:1px;width:84px;height:27px;text-align:center;font-size:10.8px;line-height:27px;padding-top:1px">domainname</div>
<div class="a" style="left:171px;top:1px;width:53px;height:27px;background:#c5d7dc;border:1px solid #1a1a1a"></div>
<div class="t" style="left:171px;top:1px;width:53px;height:27px;text-align:center;font-size:10.8px;line-height:27px;padding-top:1px">version</div>
<div class="a" style="left:226px;top:1px;width:236px;height:27px;background:#c5d7dc;border:1px solid #1a1a1a"></div>
<div class="t" style="left:226px;top:1px;width:236px;height:27px;text-align:center;font-size:10.8px;line-height:27px;padding-top:1px">directory</div>
<div class="a" style="left:464px;top:1px;width:182px;height:27px;background:#c5d7dc;border:1px solid #1a1a1a"></div>
<div class="t" style="left:464px;top:1px;width:182px;height:27px;text-align:center;font-size:10.8px;line-height:27px;padding-top:1px">os</div>
<div class="a" style="left:648px;top:1px;width:56px;height:27px;background:#c5d7dc;border:1px solid #1a1a1a"></div>
<div class="t" style="left:648px;top:1px;width:56px;height:27px;text-align:center;font-size:10.8px;line-height:27px;padding-top:1px">netport</div>
<div class="a" style="left:706px;top:1px;width:61px;height:27px;background:#c5d7dc;border:1px solid #1a1a1a"></div>
<div class="t" style="left:706px;top:1px;width:61px;height:27px;text-align:center;font-size:10.8px;line-height:27px;padding-top:1px">webport</div>
<div class="a" style="left:769px;top:1px;width:86px;height:27px;background:#c5d7dc;border:1px solid #1a1a1a"></div>
<div class="t" style="left:769px;top:1px;width:86px;height:27px;text-align:center;font-size:10.8px;line-height:27px;padding-top:1px">pcgroup</div>
<div class="a" style="left:857px;top:1px;width:101px;height:27px;background:#c5d7dc;border:1px solid #1a1a1a"></div>
<div class="a" style="left:0px;top:28px;width:14px;height:30px;background:#fafafa"></div>
<div class="a" style="left:15px;top:28px;width:1000px;height:30px;background:#ffffff"></div>
<div class="a" style="left:0px;top:58px;width:14px;height:30px;background:#fafafa"></div>
<div class="a" style="left:15px;top:58px;width:1000px;height:30px;background:#f3f3f3"></div>
<div class="a" style="left:0px;top:88px;width:14px;height:30px;background:#fafafa"></div>
<div class="a" style="left:15px;top:88px;width:1000px;height:30px;background:#ffffff"></div>
<div class="a" style="left:0px;top:118px;width:14px;height:30px;background:#fafafa"></div>
<div class="a" style="left:15px;top:118px;width:1000px;height:30px;background:#f3f3f3"></div>
<div class="a" style="left:0px;top:148px;width:14px;height:30px;background:#fafafa"></div>
<div class="a" style="left:15px;top:148px;width:1000px;height:30px;background:#ffffff"></div>
<div class="a" style="left:0px;top:58px;width:14px;height:1px;background:#d9d9d9"></div>
<div class="a" style="left:15px;top:58px;width:1000px;height:1px;background:#dcdcdc"></div>
<div class="a" style="left:0px;top:88px;width:14px;height:1px;background:#d9d9d9"></div>
<div class="a" style="left:15px;top:88px;width:1000px;height:1px;background:#dcdcdc"></div>
<div class="a" style="left:0px;top:118px;width:14px;height:1px;background:#d9d9d9"></div>
<div class="a" style="left:15px;top:118px;width:1000px;height:1px;background:#dcdcdc"></div>
<div class="a" style="left:0px;top:148px;width:14px;height:1px;background:#d9d9d9"></div>
<div class="a" style="left:15px;top:148px;width:1000px;height:1px;background:#dcdcdc"></div>
<div class="a" style="left:0px;top:178px;width:14px;height:1px;background:#d9d9d9"></div>
<div class="a" style="left:15px;top:178px;width:1000px;height:1px;background:#dcdcdc"></div>
<div class="a" style="left:14px;top:28px;width:1px;height:141px;background:#dcdcdc"></div>
<div class="a" style="left:83px;top:28px;width:1px;height:141px;background:#dcdcdc"></div>
<div class="a" style="left:169px;top:28px;width:1px;height:141px;background:#dcdcdc"></div>
<div class="a" style="left:224px;top:28px;width:1px;height:141px;background:#dcdcdc"></div>
<div class="a" style="left:462px;top:28px;width:1px;height:141px;background:#dcdcdc"></div>
<div class="a" style="left:646px;top:28px;width:1px;height:141px;background:#dcdcdc"></div>
<div class="a" style="left:704px;top:28px;width:1px;height:141px;background:#dcdcdc"></div>
<div class="a" style="left:767px;top:28px;width:1px;height:141px;background:#dcdcdc"></div>
<div class="a" style="left:855px;top:28px;width:1px;height:141px;background:#dcdcdc"></div>
<div class="a" style="left:14px;top:0px;width:1px;height:169px;background:#d8d8d8"></div>
<div class="a" style="left:0px;top:28px;width:14px;height:1px;background:#d6d6d6"></div>
<div class="a" style="left:15px;top:119px;width:1000px;height:29px;background:#3399ff"></div>
<div class="a" style="left:14px;top:119px;width:1px;height:29px;background:#c6e2ff"></div>
<div class="a" style="left:83px;top:119px;width:1px;height:29px;background:#c6e2ff"></div>
<div class="a" style="left:169px;top:119px;width:1px;height:29px;background:#c6e2ff"></div>
<div class="a" style="left:224px;top:119px;width:1px;height:29px;background:#c6e2ff"></div>
<div class="a" style="left:462px;top:119px;width:1px;height:29px;background:#c6e2ff"></div>
<div class="a" style="left:646px;top:119px;width:1px;height:29px;background:#c6e2ff"></div>
<div class="a" style="left:704px;top:119px;width:1px;height:29px;background:#c6e2ff"></div>
<div class="a" style="left:767px;top:119px;width:1px;height:29px;background:#c6e2ff"></div>
<div class="a" style="left:855px;top:119px;width:1px;height:29px;background:#c6e2ff"></div>
<div class="a" style="left:0px;top:119px;width:14px;height:29px;background:#cce4f7;border:1px solid #99c9ef"></div>
<div class="a" style="left:170px;top:119px;width:54px;height:29px;border:1px dotted #3a5a80"></div>
<div class="t" style="left:4px;top:36.84px;font-size:12px;line-height:15px;color:#000;">1</div>
<div class="t" style="left:15px;top:29px;width:68px;height:29px;overflow:hidden;padding-left:3px;font-size:12px;line-height:30px;color:#000">Notebook</div>
<div class="t" style="left:84px;top:29px;width:85px;height:29px;overflow:hidden;padding-left:3px;font-size:12px;line-height:30px;color:#000">keskon.local</div>
<div class="t" style="left:170px;top:29px;width:54px;height:29px;overflow:hidden;padding-left:3px;font-size:12px;line-height:30px;color:#000">1.0</div>
<div class="t" style="left:225px;top:29px;width:237px;height:29px;overflow:hidden;padding-left:3px;font-size:12px;line-height:30px;color:#000">C:\Program Files\Keskon\InfraControlClient</div>
<div class="t" style="left:463px;top:29px;width:183px;height:29px;overflow:hidden;padding-left:3px;font-size:12px;line-height:30px;color:#000">Windows 7</div>
<div class="t" style="left:647px;top:29px;width:57px;height:29px;overflow:hidden;padding-left:3px;font-size:12px;line-height:30px;color:#000"><span style="display:inline-block;transform-origin:0 0;transform:scaleX(0.8239700374531835)">8181</span></div>
<div class="t" style="left:705px;top:29px;width:62px;height:29px;overflow:hidden;padding-left:3px;font-size:12px;line-height:30px;color:#000"><span style="display:inline-block;transform-origin:0 0;transform:scaleX(0.898876404494382)">8080</span></div>
<div class="t" style="left:768px;top:29px;width:87px;height:29px;overflow:hidden;padding-left:3px;font-size:12px;line-height:30px;color:#000"><span style="display:inline-block;transform-origin:0 0;transform:scaleX(0.9625668449197862)">bali</span></div>
<div class="t" style="left:856px;top:29px;width:102px;height:29px;overflow:hidden;padding-left:3px;font-size:12px;line-height:30px;color:#000">B4:99:BA:00:00:00</div>
<div class="t" style="left:4px;top:66.84px;font-size:12px;line-height:15px;color:#000;">2</div>
<div class="t" style="left:15px;top:59px;width:68px;height:29px;overflow:hidden;padding-left:3px;font-size:12px;line-height:30px;color:#000">w10x64</div>
<div class="t" style="left:84px;top:59px;width:85px;height:29px;overflow:hidden;padding-left:3px;font-size:12px;line-height:30px;color:#000">keskon.local</div>
<div class="t" style="left:170px;top:59px;width:54px;height:29px;overflow:hidden;padding-left:3px;font-size:12px;line-height:30px;color:#000">1.0</div>
<div class="t" style="left:225px;top:59px;width:237px;height:29px;overflow:hidden;padding-left:3px;font-size:12px;line-height:30px;color:#000">C:\Program Files\Keskon\InfraControlClient</div>
<div class="t" style="left:463px;top:59px;width:183px;height:29px;overflow:hidden;padding-left:3px;font-size:12px;line-height:30px;color:#000">Windows 8</div>
<div class="t" style="left:647px;top:59px;width:57px;height:29px;overflow:hidden;padding-left:3px;font-size:12px;line-height:30px;color:#000"><span style="display:inline-block;transform-origin:0 0;transform:scaleX(0.8239700374531835)">8181</span></div>
<div class="t" style="left:705px;top:59px;width:62px;height:29px;overflow:hidden;padding-left:3px;font-size:12px;line-height:30px;color:#000"><span style="display:inline-block;transform-origin:0 0;transform:scaleX(0.898876404494382)">8080</span></div>
<div class="t" style="left:768px;top:59px;width:87px;height:29px;overflow:hidden;padding-left:3px;font-size:12px;line-height:30px;color:#000">not_configured</div>
<div class="t" style="left:856px;top:59px;width:102px;height:29px;overflow:hidden;padding-left:3px;font-size:12px;line-height:30px;color:#000">40:A8:F0:00:00:00</div>
<div class="t" style="left:4px;top:96.84px;font-size:12px;line-height:15px;color:#000;">3</div>
<div class="t" style="left:15px;top:89px;width:68px;height:29px;overflow:hidden;padding-left:3px;font-size:12px;line-height:30px;color:#000">ws03wp</div>
<div class="t" style="left:84px;top:89px;width:85px;height:29px;overflow:hidden;padding-left:3px;font-size:12px;line-height:30px;color:#000">keskon.local</div>
<div class="t" style="left:170px;top:89px;width:54px;height:29px;overflow:hidden;padding-left:3px;font-size:12px;line-height:30px;color:#000">1.0</div>
<div class="t" style="left:225px;top:89px;width:237px;height:29px;overflow:hidden;padding-left:3px;font-size:12px;line-height:30px;color:#000">c:\temp\InfraControl Vorabversion</div>
<div class="t" style="left:463px;top:89px;width:183px;height:29px;overflow:hidden;padding-left:3px;font-size:12px;line-height:30px;color:#000">Windows 7</div>
<div class="t" style="left:647px;top:89px;width:57px;height:29px;overflow:hidden;padding-left:3px;font-size:12px;line-height:30px;color:#000"><span style="display:inline-block;transform-origin:0 0;transform:scaleX(0.8239700374531835)">8181</span></div>
<div class="t" style="left:705px;top:89px;width:62px;height:29px;overflow:hidden;padding-left:3px;font-size:12px;line-height:30px;color:#000"><span style="display:inline-block;transform-origin:0 0;transform:scaleX(0.898876404494382)">8080</span></div>
<div class="t" style="left:768px;top:89px;width:87px;height:29px;overflow:hidden;padding-left:3px;font-size:12px;line-height:30px;color:#000">not_configured</div>
<div class="t" style="left:856px;top:89px;width:102px;height:29px;overflow:hidden;padding-left:3px;font-size:12px;line-height:30px;color:#000">00:19:99:00:00:00</div>
<div class="t" style="left:2.5px;top:126.84px;font-size:12px;line-height:15px;color:#000;font-weight:bold;">4</div>
<div class="t" style="left:15px;top:119px;width:68px;height:29px;overflow:hidden;padding-left:3px;font-size:12px;line-height:30px;color:#fff">WS05WP</div>
<div class="t" style="left:84px;top:119px;width:85px;height:29px;overflow:hidden;padding-left:3px;font-size:12px;line-height:30px;color:#fff">keskon.local</div>
<div class="t" style="left:170px;top:119px;width:54px;height:29px;overflow:hidden;padding-left:3px;font-size:12px;line-height:30px;color:#fff">1.0</div>
<div class="t" style="left:225px;top:119px;width:237px;height:29px;overflow:hidden;padding-left:3px;font-size:12px;line-height:30px;color:#fff">C:\projects\InfraControlSvc\x64\Debug</div>
<div class="t" style="left:463px;top:119px;width:183px;height:29px;overflow:hidden;padding-left:3px;font-size:12px;line-height:30px;color:#fff"><span style="display:inline-block;transform-origin:0 0;transform:scaleX(0.9383306751727805)">Windows Server 2012 R2 Standard</span></div>
<div class="t" style="left:647px;top:119px;width:57px;height:29px;overflow:hidden;padding-left:3px;font-size:12px;line-height:30px;color:#fff"><span style="display:inline-block;transform-origin:0 0;transform:scaleX(0.8239700374531835)">8181</span></div>
<div class="t" style="left:705px;top:119px;width:62px;height:29px;overflow:hidden;padding-left:3px;font-size:12px;line-height:30px;color:#fff"><span style="display:inline-block;transform-origin:0 0;transform:scaleX(0.898876404494382)">8080</span></div>
<div class="t" style="left:768px;top:119px;width:87px;height:29px;overflow:hidden;padding-left:3px;font-size:12px;line-height:30px;color:#fff"><span style="display:inline-block;transform-origin:0 0;transform:scaleX(0.881057268722467)">safe</span></div>
<div class="t" style="left:856px;top:119px;width:102px;height:29px;overflow:hidden;padding-left:3px;font-size:12px;line-height:30px;color:#fff">B8:CA:3A:AA:5B:C5</div>
<div class="t" style="left:4px;top:156.84px;font-size:12px;line-height:15px;color:#000;">5</div>
<div class="t" style="left:15px;top:149px;width:68px;height:29px;overflow:hidden;padding-left:3px;font-size:12px;line-height:30px;color:#000">wwks01</div>
<div class="t" style="left:170px;top:149px;width:54px;height:29px;overflow:hidden;padding-left:3px;font-size:12px;line-height:30px;color:#000">1.0</div>
<div class="t" style="left:225px;top:149px;width:237px;height:29px;overflow:hidden;padding-left:3px;font-size:12px;line-height:30px;color:#000">C:\Program Files\Keskon\InfraControlSvc</div>
<div class="t" style="left:463px;top:149px;width:183px;height:29px;overflow:hidden;padding-left:3px;font-size:12px;line-height:30px;color:#000">Windows Vista</div>
<div class="t" style="left:647px;top:149px;width:57px;height:29px;overflow:hidden;padding-left:3px;font-size:12px;line-height:30px;color:#000"><span style="display:inline-block;transform-origin:0 0;transform:scaleX(0.8239700374531835)">8181</span></div>
<div class="t" style="left:705px;top:149px;width:62px;height:29px;overflow:hidden;padding-left:3px;font-size:12px;line-height:30px;color:#000"><span style="display:inline-block;transform-origin:0 0;transform:scaleX(0.898876404494382)">8080</span></div>
<div class="t" style="left:768px;top:149px;width:87px;height:29px;overflow:hidden;padding-left:3px;font-size:12px;line-height:30px;color:#000">not_configured</div>
<div class="t" style="left:856px;top:149px;width:102px;height:29px;overflow:hidden;padding-left:3px;font-size:12px;line-height:30px;color:#000">00:10:00:00:00:00</div>
</div>
<div class="a" style="left:1187px;top:117px;width:16px;height:169px;background:#fff"></div>
<div class="a" style="left:1187px;top:134px;width:16px;height:107px;background:#cdcdcd"></div>
<svg class="a" style="left:1190px;top:121px" width="10" height="7" viewBox="0 0 10 7"><path d="M1 6 L5 2 L9 6" stroke="#606060" stroke-width="1.2" fill="none"/></svg>
<div class="a" style="left:1187px;top:270px;width:16px;height:1px;background:#e6e6e6"></div>
<svg class="a" style="left:1190px;top:275px" width="10" height="7" viewBox="0 0 10 7"><path d="M1 1 L5 5 L9 1" stroke="#606060" stroke-width="1.2" fill="none"/></svg>
<div class="a" style="left:302px;top:286px;width:885px;height:17px;background:#fff"></div>
<div class="a" style="left:302px;top:286px;width:885px;height:1px;background:#e3e3e3"></div>
<div class="a" style="left:319px;top:287px;width:660px;height:16px;background:#cdcdcd"></div>
<div class="a" style="left:318px;top:287px;width:1px;height:16px;background:#e8e8e8"></div>
<div class="a" style="left:1170px;top:287px;width:1px;height:16px;background:#e8e8e8"></div>
<svg class="a" style="left:306px;top:290px" width="7" height="10" viewBox="0 0 7 10"><path d="M6 1 L2 5 L6 9" stroke="#606060" stroke-width="1.2" fill="none"/></svg>
<svg class="a" style="left:1176px;top:290px" width="7" height="10" viewBox="0 0 7 10"><path d="M1 1 L5 5 L1 9" stroke="#606060" stroke-width="1.2" fill="none"/></svg>
<div class="a" style="left:1187px;top:286px;width:16px;height:17px;background:#f0f0f0"></div>
<div class="a" style="left:301px;top:310px;width:904px;height:468px;border:1px solid #a6a6a6;box-shadow:inset 1px 1px 0 #fff"></div>
<div class="a" style="left:313px;top:322px;width:880px;height:25px;background:#c5d7dc;border:1px solid #111"></div>
<div class="t" style="left:321.5px;top:328.26px;font-size:10.8px;line-height:14px;color:#000;">Clients - Detailansicht (1)</div>
<div class="t" style="left:312px;top:357.02px;font-size:10.9px;line-height:14px;color:#000;">Hostname (nicht änderbar)</div>
<div class="inp" style="left:448px;top:353px;width:334px"></div>
<div class="t" style="left:451px;top:357.02px;font-size:10.9px;line-height:14px;color:#6d6d6d;">WS05WP</div>
<div class="t" style="left:312px;top:383.02px;font-size:10.9px;line-height:14px;color:#000;">Anlegedatum</div>
<div class="inp" style="left:448px;top:379px;width:334px"></div>
<div class="t" style="left:451px;top:383.02px;font-size:10.9px;line-height:14px;color:#6d6d6d;">2015-05-11T07:48:07</div>
<div class="t" style="left:312px;top:409.02px;font-size:10.9px;line-height:14px;color:#000;">Lestes mal aktiv am (2)</div>
<div class="inp" style="left:448px;top:405px;width:334px"></div>
<div class="t" style="left:451px;top:409.02px;font-size:10.9px;line-height:14px;color:#6d6d6d;">2015-05-11T07:48:07</div>
<div class="t" style="left:312px;top:435.02px;font-size:10.9px;line-height:14px;color:#000;">Version</div>
<div class="inp" style="left:448px;top:431px;width:334px"></div>
<div class="t" style="left:451px;top:435.02px;font-size:10.9px;line-height:14px;color:#6d6d6d;">1.0</div>
<div class="t" style="left:312px;top:461.02px;font-size:10.9px;line-height:14px;color:#000;">Protokolversion</div>
<div class="inp" style="left:448px;top:457px;width:334px"></div>
<div class="t" style="left:451px;top:461.02px;font-size:10.9px;line-height:14px;color:#6d6d6d;">1.0</div>
<div class="t" style="left:312px;top:487.02px;font-size:10.9px;line-height:14px;color:#000;">Pfad</div>
<div class="inp" style="left:448px;top:483px;width:334px"></div>
<div class="t" style="left:451px;top:487.02px;font-size:10.9px;line-height:14px;color:#6d6d6d;">C:\projects\InfraControlSvc\x64\Debug</div>
<div class="t" style="left:312px;top:513.02px;font-size:10.9px;line-height:14px;color:#000;">Domäne</div>
<div class="inp" style="left:448px;top:509px;width:334px"></div>
<div class="t" style="left:451px;top:513.02px;font-size:10.9px;line-height:14px;color:#6d6d6d;">keskon.local</div>
<div class="t" style="left:312px;top:539.02px;font-size:10.9px;line-height:14px;color:#000;">OS</div>
<div class="inp" style="left:448px;top:535px;width:334px"></div>
<div class="t" style="left:451px;top:539.02px;font-size:10.9px;line-height:14px;color:#6d6d6d;">Windows Server 2012 R2 Standard</div>
<div class="t" style="left:312px;top:565.02px;font-size:10.9px;line-height:14px;color:#000;">Netzwerkport</div>
<div class="inp" style="left:448px;top:561px;width:334px"></div>
<div class="t" style="left:451px;top:565.02px;font-size:10.9px;line-height:14px;color:#6d6d6d;">8181</div>
<div class="t" style="left:312px;top:591.02px;font-size:10.9px;line-height:14px;color:#000;">Webserverport</div>
<div class="inp" style="left:448px;top:587px;width:334px"></div>
<div class="t" style="left:451px;top:591.02px;font-size:10.9px;line-height:14px;color:#6d6d6d;">8080</div>
<div class="t" style="left:312px;top:617.02px;font-size:10.9px;line-height:14px;color:#000;">Managementserver</div>
<div class="inp" style="left:448px;top:613px;width:334px"></div>
<div class="t" style="left:451px;top:617.02px;font-size:10.9px;line-height:14px;color:#6d6d6d;">ws05wp</div>
<div class="t" style="left:312px;top:643.02px;font-size:10.9px;line-height:14px;color:#000;">PC Gruppe</div>
<div class="inp" style="left:448px;top:639px;width:334px"></div>
<div class="t" style="left:451px;top:643.02px;font-size:10.9px;line-height:14px;color:#6d6d6d;">safe</div>
<div class="t" style="left:312px;top:669.02px;font-size:10.9px;line-height:14px;color:#000;">PC Type</div>
<div class="inp" style="left:448px;top:665px;width:334px"></div>
<div class="t" style="left:451px;top:669.02px;font-size:10.9px;line-height:14px;color:#6d6d6d;">desktop</div>
<div class="t" style="left:787.5px;top:357.02px;font-size:10.9px;line-height:14px;color:#000;letter-spacing:-0.3px">Energieklasse</div>
<div class="inp" style="left:859px;top:353px;width:334px"></div>
<div class="t" style="left:862px;top:357.02px;font-size:10.9px;line-height:14px;color:#6d6d6d;">not_configured</div>
<div class="t" style="left:787.5px;top:383.02px;font-size:10.9px;line-height:14px;color:#000;">CPU Kerne</div>
<div class="inp" style="left:859px;top:379px;width:334px"></div>
<div class="t" style="left:862px;top:383.02px;font-size:10.9px;line-height:14px;color:#6d6d6d;">8</div>
<div class="t" style="left:787.5px;top:409.02px;font-size:10.9px;line-height:14px;color:#000;">MAC 1</div>
<div class="inp" style="left:859px;top:405px;width:334px"></div>
<div class="t" style="left:862px;top:409.02px;font-size:10.9px;line-height:14px;color:#6d6d6d;">B8:CA:3A:AA:5B:C5</div>
<div class="t" style="left:787.5px;top:435.02px;font-size:10.9px;line-height:14px;color:#000;">MAC 2</div>
<div class="inp" style="left:859px;top:431px;width:334px"></div>
<div class="t" style="left:787.5px;top:461.02px;font-size:10.9px;line-height:14px;color:#000;">MAC 3</div>
<div class="inp" style="left:859px;top:457px;width:334px"></div>
<div class="t" style="left:787.5px;top:487.02px;font-size:10.9px;line-height:14px;color:#000;">MAC 4</div>
<div class="inp" style="left:859px;top:483px;width:334px"></div>
<div class="t" style="left:787.5px;top:513.02px;font-size:10.9px;line-height:14px;color:#000;">Hersteller</div>
<div class="inp" style="left:859px;top:509px;width:334px"></div>
<div class="t" style="left:862px;top:513.02px;font-size:10.9px;line-height:14px;color:#6d6d6d;">Dell Inc.</div>
<div class="t" style="left:787.5px;top:539.02px;font-size:10.9px;line-height:14px;color:#000;">Produkt</div>
<div class="inp" style="left:859px;top:535px;width:334px"></div>
<div class="t" style="left:862px;top:539.02px;font-size:10.9px;line-height:14px;color:#6d6d6d;">Precision T1700</div>
<div class="cb" style="left:788px;top:564px"></div>
<div class="t" style="left:805px;top:564.22px;font-size:10.9px;line-height:14px;color:#6d6d6d;">S1</div>
<div class="cb" style="left:859px;top:564px"></div>
<div class="t" style="left:876px;top:564.22px;font-size:10.9px;line-height:14px;color:#6d6d6d;">Hiberboot</div>
<div class="cb" style="left:788px;top:590px"></div>
<div class="t" style="left:805px;top:590.22px;font-size:10.9px;line-height:14px;color:#6d6d6d;">S2</div>
<div class="cb" style="left:859px;top:590px"></div>
<svg class="a" style="left:859px;top:590px" width="13" height="13" viewBox="0 0 13 13"><path d="M3 6.5 L5.5 9.5 L10.5 3" stroke="#a8a8a8" stroke-width="1.8" fill="none"/></svg>
<div class="t" style="left:876px;top:590.22px;font-size:10.9px;line-height:14px;color:#6d6d6d;">Fast S4</div>
<div class="cb" style="left:788px;top:616px"></div>
<svg class="a" style="left:788px;top:616px" width="13" height="13" viewBox="0 0 13 13"><path d="M3 6.5 L5.5 9.5 L10.5 3" stroke="#a8a8a8" stroke-width="1.8" fill="none"/></svg>
<div class="t" style="left:805px;top:616.22px;font-size:10.9px;line-height:14px;color:#6d6d6d;">S3</div>
<div class="cb" style="left:859px;top:616px"></div>
<div class="t" style="left:876px;top:616.22px;font-size:10.9px;line-height:14px;color:#6d6d6d;">Hibernationdatei</div>
<div class="cb" style="left:788px;top:642px"></div>
<svg class="a" style="left:788px;top:642px" width="13" height="13" viewBox="0 0 13 13"><path d="M3 6.5 L5.5 9.5 L10.5 3" stroke="#a8a8a8" stroke-width="1.8" fill="none"/></svg>
<div class="t" style="left:805px;top:642.22px;font-size:10.9px;line-height:14px;color:#6d6d6d;">S4</div>
<div class="cb" style="left:859px;top:642px"></div>
<div class="t" style="left:876px;top:642.22px;font-size:10.9px;line-height:14px;color:#6d6d6d;">Webserver starten</div>
<div class="cb" style="left:788px;top:668px"></div>
<svg class="a" style="left:788px;top:668px" width="13" height="13" viewBox="0 0 13 13"><path d="M3 6.5 L5.5 9.5 L10.5 3" stroke="#a8a8a8" stroke-width="1.8" fill="none"/></svg>
<div class="t" style="left:805px;top:668.22px;font-size:10.9px;line-height:14px;color:#6d6d6d;">S5</div>
<div class="cb" style="left:859px;top:668px"></div>
<div class="t" style="left:876px;top:668.22px;font-size:10.9px;line-height:14px;color:#6d6d6d;">SSL</div>
<div class="t" style="left:312px;top:691.22px;font-size:10.9px;line-height:14px;color:#000;">(1) Daten werden von den Clients geliefert und können nicht geändert werden.</div>
<div class="t" style="left:312px;top:710.79px;font-size:10.7px;line-height:13px;color:#000;">(2) Siehe Dokumentation</div>
<div class="a" style="left:1054px;top:744px;width:138px;height:21px;border:1px solid #adadad;background:#f0f0f0"></div>
<div class="t" style="left:1056px;top:748.79px;font-size:10.7px;line-height:13px;color:#6d6d6d;">Speichern in der Datenbank</div>
<div class="a" style="left:1211px;top:796px;width:2px;height:2px;background:#b8b8b8"></div>
<div class="a" style="left:1211px;top:800px;width:2px;height:2px;background:#b8b8b8"></div>
<div class="a" style="left:1207px;top:800px;width:2px;height:2px;background:#b8b8b8"></div>
<div class="a" style="left:1211px;top:804px;width:2px;height:2px;background:#b8b8b8"></div>
<div class="a" style="left:1207px;top:804px;width:2px;height:2px;background:#b8b8b8"></div>
<div class="a" style="left:1203px;top:804px;width:2px;height:2px;background:#b8b8b8"></div>
</body></html>
